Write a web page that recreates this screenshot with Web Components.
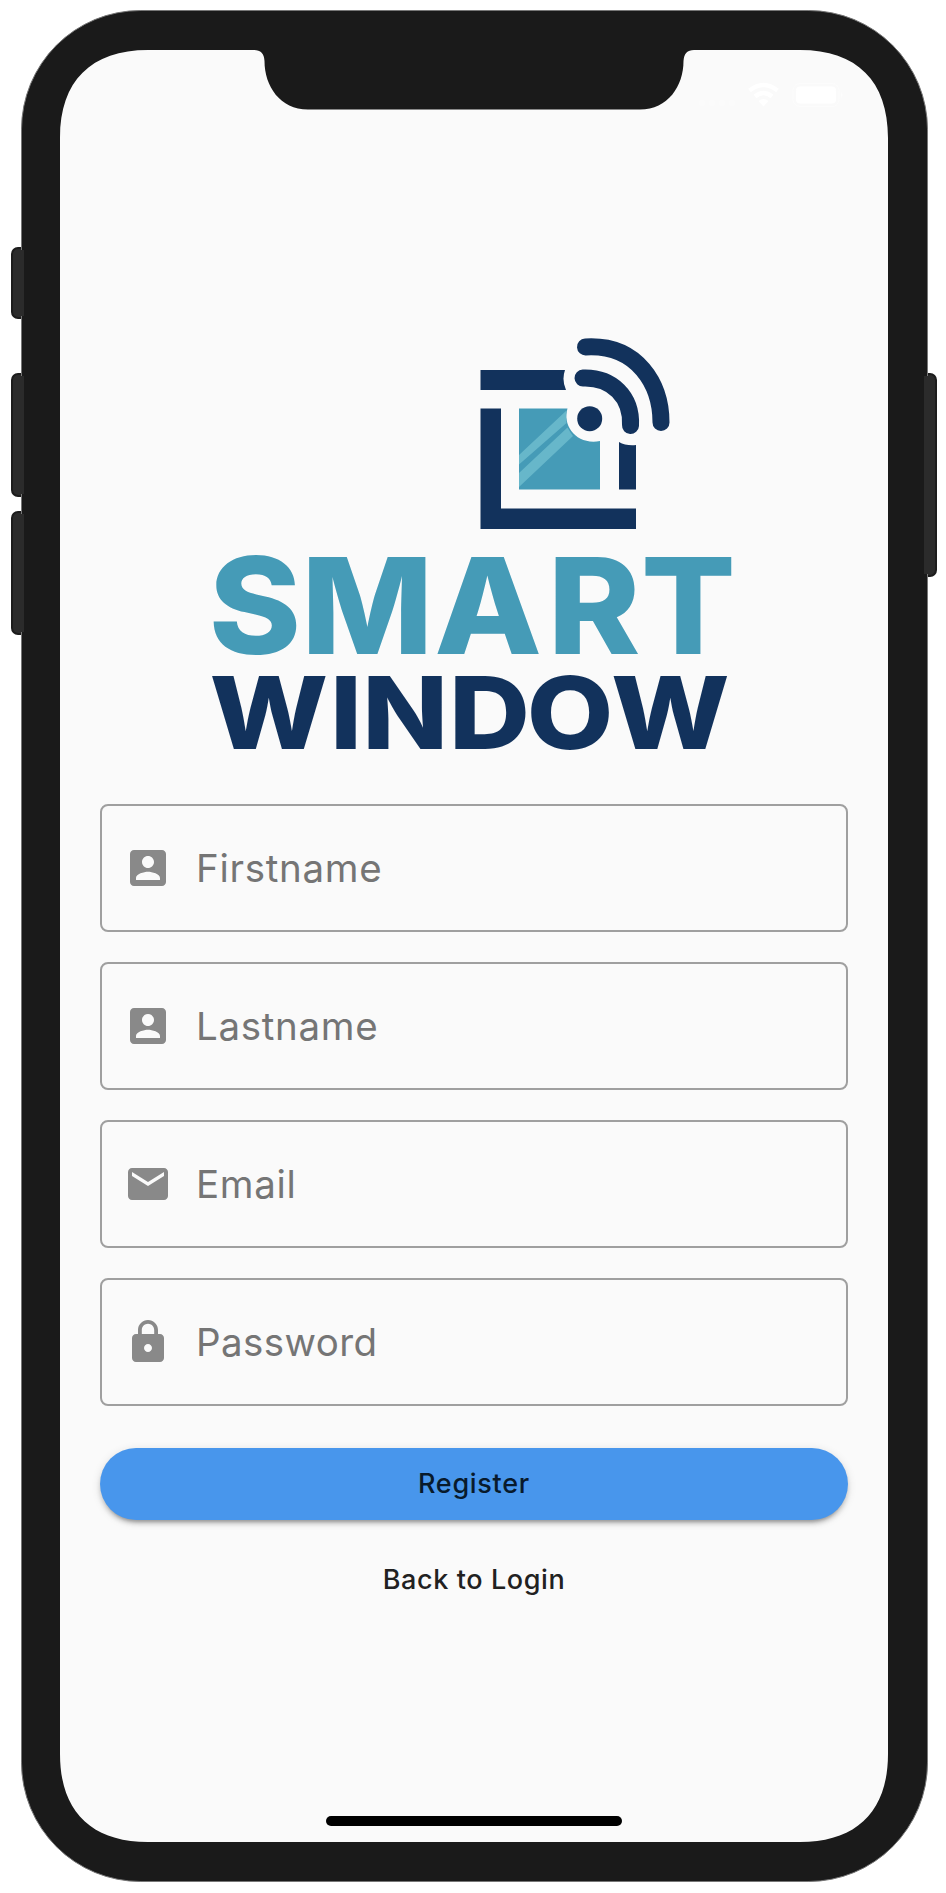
<!DOCTYPE html>
<html lang="en">
<head>
<meta charset="utf-8">
<title>Smart Window – Register</title>
<style>
body{margin:0;background:#fff;font-family:Inter,"Liberation Sans",sans-serif}
</style>
</head>
<body>
<phone-frame>
  <status-icons></status-icons>
  <smart-logo></smart-logo>
  <register-form></register-form>
</phone-frame>
<script>
const define=(name,html,setup)=>customElements.define(name,class extends HTMLElement{
  constructor(){super();this.attachShadow({mode:'open'}).innerHTML=html;}
  connectedCallback(){if(setup)setup(this,this.shadowRoot);}
});

define('phone-frame',`<style>
:host{display:grid;width:946px;height:1893px;overflow:hidden}
svg,.screen{grid-area:1/1}
.screen{box-sizing:border-box;margin:50px 58px 51px 60px;display:flex;flex-direction:column;align-items:center;z-index:1}
.home{width:296px;height:10px;border-radius:5px;background:#000;margin:auto 0 16px}
</style>
<svg width="946" height="1893" viewBox="0 0 946 1893">
<g fill="#2b2b2b" stroke="#1c1c1c" stroke-width="2">
<rect x="12" y="248" width="24" height="70" rx="6"/><rect x="12" y="374" width="24" height="122" rx="6"/><rect x="12" y="512" width="24" height="122" rx="6"/>
<rect x="912" y="374" width="24" height="202" rx="6"/></g>
<rect x="21.500" y="10.500" width="906" height="1871" rx="119" fill="#1a1a1a" stroke="#777"/>
<path fill="#2b2b2b" d="M20 250h4v66h-4zM20 376h4v118h-4zM20 514h4v118h-4zM924 376h4v198h-4z"/>
<path fill="#fafafa" d="M148 50H254Q264 50 264.500 61C264.500 86 280 109.500 308 109.500H640C668 109.500 683.500 86 683.500 61Q684 50 694 50H800C857 50 888 81 888 138V1754C888 1811 857 1842 800 1842H148C91 1842 60 1811 60 1754V138C60 81 91 50 148 50Z"/>
</svg>
<div class="screen"><slot></slot><div class="home"></div></div>`);

define('status-icons',`<style>
:host{display:flex;align-self:flex-end;height:59px;align-items:flex-end;margin-right:44px}
</style>
<svg width="147" height="28" viewBox="0 0 147 28" fill="#fff">
<g opacity=".35"><circle cx="5" cy="22" r="3"/><circle cx="25" cy="22" r="3"/><circle cx="35" cy="22" r="3"/><circle cx="15" cy="22" r="3"/></g>
<g fill="none" stroke="#fff" stroke-width="4.500"><path d="M52.500 9.500Q66.500 -1.500 80.500 9.500"/><path d="M58 15.500Q66.500 8.500 75 15.500"/></g>
<path d="M61.500 20Q66.500 16 71.500 20L66.500 25.500Z"/>
<rect x="99" y="5.500" width="40" height="17" rx="4"/><rect x="96" y="2.500" width="46" height="23" rx="7" fill="none" stroke="#fff" stroke-opacity=".4"/><path d="M144 11q3 3 0 6z" opacity=".5"/></svg>`);

define('smart-logo',`<style>
:host{display:block;width:540px;height:450px;margin-top:221px}
svg{display:block}text{font-family:Inter,"Liberation Sans",sans-serif;font-weight:800}
</style>
<svg width="540" height="450" viewBox="204 330 540 450">
<g fill="#12325c">
<path d="M480.500 370H565Q561.500 380 566 390H480.500ZM480.500 408.500H501V508.500H636V529H480.500ZM619 442Q626 446 636 445V489.500H619Z"/>
<circle cx="589.700" cy="418.700" r="12.500"/></g>
<path fill="#459bb7" d="M519 408.500H567.500C562 426 577 445.500 600 441V489.500H519Z"/>
<path fill="#67b7ca" d="M519 455L566.500 410.500Q565.500 417 566.500 423L519 464.500ZM519 473L567.500 427.500Q570 432 573 436L519 487Z"/>
<g fill="none" stroke="#12325c" stroke-width="17" stroke-linecap="round"><path d="M585.500 347C638 344 661 385 661 422.500"/><path d="M583 378C612 377 632 397 630.500 425.500"/></g>
<text data-word="smart" y="654.500" font-size="134" fill="#459bb7">SMART</text>
<text data-word="window" y="749" font-size="101" fill="#12325c">WINDOW</text>
</svg>`,(host,root)=>{
  // Optical centre of every letter in the wordmark, with the horizontal stretch of each line
  const lines={smart:{c:[254.700,367,488.500,597,688.500],s:1.045},window:{c:[269,346,405,490,570,670.500],s:1.110}};
  const ctx=document.createElement('canvas').getContext('2d');
  root.querySelectorAll('text').forEach(t=>{
    const {c,s}=lines[t.dataset.word];
    ctx.font='800 '+t.getAttribute('font-size')+'px Inter';
    t.setAttribute('transform','scale('+s+' 1)');
    t.setAttribute('x',[...t.textContent].map((ch,i)=>{
      const m=ctx.measureText(ch);
      return c[i]/s-(m.actualBoundingBoxRight-m.actualBoundingBoxLeft)/2;
    }).join(' '));
  });
});

const icons={
account:'M3 5v14c0 1.1.89 2 2 2h14c1.1 0 2-.9 2-2V5c0-1.1-.9-2-2-2H5c-1.11 0-2 .9-2 2zm12 4c0 1.66-1.34 3-3 3s-3-1.34-3-3 1.34-3 3-3 3 1.34 3 3zm-9 8c0-2 4-3.1 6-3.1s6 1.1 6 3.1v1H6v-1z',
mail:'M20 4H4c-1.1 0-1.990.9-1.990 2L2 18c0 1.1.9 2 2 2h16c1.1 0 2-.9 2-2V6c0-1.1-.9-2-2-2zm0 4l-8 5-8-5V6l8 5 8-5v2z',
lock:'M18 8h-1V6c0-2.760-2.240-5-5-5S7 3.240 7 6v2H6c-1.1 0-2 .9-2 2v10c0 1.1.9 2 2 2h12c1.1 0 2-.9 2-2V10c0-1.1-.9-2-2-2zm-6 9c-1.1 0-2-.9-2-2s.9-2 2-2 2 .9 2 2-.9 2-2 2zm3.1-9H8.900V6c0-1.710 1.390-3.100 3.100-3.100s3.100 1.390 3.100 3.100v2z'};
define('text-field',`<style>
:host{display:flex;box-sizing:border-box;height:128px;border:2px solid #9f9f9f;border-radius:8px;align-items:center;padding-left:22px;color:#757575;font:400 38.500px/48px Inter,"Liberation Sans",sans-serif;letter-spacing:var(--track,.7px)}
svg{margin-right:24px;flex:none}
</style><svg width="48" height="48" viewBox="0 0 24 24" fill="#898989"><path/></svg><slot></slot>`,
(host,root)=>root.querySelector('path').setAttribute('d',icons[host.getAttribute('icon')]));

define('pill-button',`<style>
:host{display:block}
button{display:block;width:100%;height:72px;border:0;border-radius:36px;background:#4896ec;color:#081a2c;padding:0;font:500 27px/72px Inter,"Liberation Sans",sans-serif;letter-spacing:.7px;box-shadow:0 6px 3px -4px #0003,0 4px 4px #00000024,0 2px 10px #0000001f}
:host([plain]) button{background:none;box-shadow:none;color:#212121;letter-spacing:.6px}
</style><button><slot></slot></button>`);

define('register-form',`<style>
:host{display:flex;flex-direction:column;width:748px;margin-top:24px}
.fields{display:grid;gap:30px;margin-bottom:42px}
[icon=lock]{--track:.4px}
pill-button[plain]{margin-top:24px}
</style>
<div class="fields">
<text-field icon="account">Firstname</text-field>
<text-field icon="account">Lastname</text-field>
<text-field icon="mail">Email</text-field>
<text-field icon="lock">Password</text-field>
</div>
<pill-button>Register</pill-button>
<pill-button plain>Back to Login</pill-button>`);
</script>
</body>
</html>
